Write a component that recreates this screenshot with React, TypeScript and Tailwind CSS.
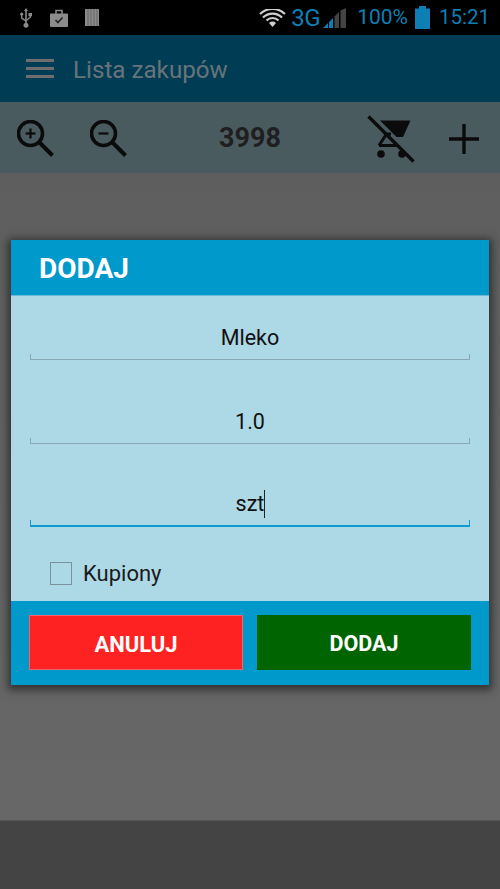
function ZoomIcon({ minus }: { minus?: boolean }) {
  return (
    <svg width="38" height="38" viewBox="0 0 38 38" fill="none" stroke="#0b0b0b" strokeWidth="3.600">
      <circle cx="13.500" cy="13.500" r="12" />
      <path d="M22 22l13.500 13.500" strokeWidth="4" />
      <path d="M8.500 13.500h10" strokeWidth="2.200" />
      {!minus && <path d="M13.500 8.500v10" strokeWidth="2.200" />}
    </svg>
  );
}

function CartOff() {
  return (
    <svg width="48" height="48" viewBox="0 0 48 48" fill="#0b0b0b">
      <path d="M13 5.500h30.500l-7.500 16.500H29.500z" />
      <path d="M12 30.500L19.500 19H24M12 30.500H31" fill="none" stroke="#0b0b0b" strokeWidth="3" />
      <circle cx="14" cy="39" r="3.800" />
      <circle cx="35" cy="39" r="3.800" />
      <path d="M1.500 1.500l45 45" stroke="#0b0b0b" strokeWidth="3.400" />
    </svg>
  );
}

function Field({ value, active, caret }: { value: string; active?: boolean; caret?: boolean }) {
  return (
    <div className={`relative mx-[19px] flex h-[38px] items-center justify-center pb-[6px] ${active ? 'border-b-2 border-[#0f9ad0]' : 'border-b border-[#8aa7b3]'}`}>
      <span className="relative text-[21.500px] leading-none text-[#111]">
        {value}
        {caret && <span className="absolute -right-[1px] -top-[3px] h-[28px] w-px bg-[#222]" />}
      </span>
      <span className={`absolute bottom-0 left-0 h-[5px] w-px ${active ? 'bg-[#0f9ad0]' : 'bg-[#8aa7b3]'}`} />
      <span className={`absolute bottom-0 right-0 h-[5px] w-px ${active ? 'bg-[#0f9ad0]' : 'bg-[#8aa7b3]'}`} />
    </div>
  );
}

export default function App() {
  return (
    <div className="relative flex h-[889px] w-[500px] flex-col overflow-hidden bg-[#666] font-['Roboto',sans-serif]">
      {/* Status bar */}
      <div className="flex h-[35px] items-center justify-between bg-black pl-[19px] pr-[10px]">
        <div className="flex items-center">
          <svg width="14" height="20" viewBox="0 0 14 20" fill="#8b8b8b">
            <path d="M7 0l2 3H7.800v12a2.500 2.500 0 11-1.600 0V13.500L2 10.500V7.500a1.500 1.500 0 111.400 0v2.300l2.800 2V3H5z" />
            <path d="M9.500 5h3.500v3.200h-1V9.500L7.800 13v-1.700l2.800-2.400V8.200H9.500z" />
          </svg>
          <svg className="ml-[17px]" width="18" height="18" viewBox="0 0 18 18">
            <path d="M1 4.500h16a1 1 0 011 1V17a1 1 0 01-1 1H1a1 1 0 01-1-1V5.500a1 1 0 011-1z" fill="#8b8b8b" />
            <path d="M6 5V1.500h6V5" fill="none" stroke="#8b8b8b" strokeWidth="1.500" />
            <path d="M5.500 11l2.500 2.500 4.500-5" fill="none" stroke="#222" strokeWidth="1.600" />
          </svg>
          <svg className="ml-[17px]" width="14" height="17" viewBox="0 0 14 17">
            <path d="M0 0h14v17H0z" fill="#8b8b8b" />
            <path d="M3 0v17M6 0v17M9 0v17M12 0v17" stroke="#5c5c5c" strokeWidth="0.800" />
          </svg>
        </div>
        <div className="flex items-center text-[#0d7fb5]">
          <svg width="27" height="18" viewBox="0 0 27 18" fill="none" stroke="#cfcfcf" strokeWidth="2.200">
            <path d="M1 5a18 18 0 0125 0" />
            <path d="M4 8.500a13.500 13.500 0 0119 0" />
            <path d="M7.500 11.500a8.500 8.500 0 0112 0" />
            <path d="M10 14l3.500 4 3.500-4a5 5 0 00-7 0z" fill="#cfcfcf" stroke="none" />
          </svg>
          <span className="ml-[5px] text-[24px] leading-none tracking-[-0.500px]">3G</span>
          <svg className="ml-[3px]" width="23" height="20" viewBox="0 0 23 20">
            <path d="M0 20l5-5v5z" fill="#0d7fb5" />
            <path d="M6 14l4-4v10H6z" fill="#0d7fb5" />
            <path d="M11.500 8.500L16 4v16h-4.500z" fill="#444" />
            <path d="M17.500 2.500L23 0v20h-5.500z" fill="#444" />
          </svg>
          <span className="ml-[11px] text-[21px] leading-none">100%</span>
          <svg className="ml-[7px]" width="15" height="23" viewBox="0 0 15 23" fill="#0d7fb5">
            <path d="M4 0h7v2.500h4V23H0V2.500h4z" />
          </svg>
          <span className="ml-[9px] text-[20.500px] leading-none">15:21</span>
        </div>
      </div>

      {/* App bar */}
      <div className="flex h-[67px] items-center bg-[#003d55] pl-[26px]">
        <svg width="28" height="19" viewBox="0 0 28 19" fill="#6e6e6e">
          <path d="M0 0h28v3H0zM0 8h28v3H0zM0 16h28v3H0z" />
        </svg>
        <span className="ml-[19px] pt-[3px] text-[24.200px] text-[#68747a]">Lista zakupów</span>
      </div>

      {/* Toolbar */}
      <div className="flex h-[71px] items-center bg-[#4a5b60] pt-[2px]">
        <div className="ml-[17px]"><ZoomIcon /></div>
        <div className="ml-[35px]"><ZoomIcon minus /></div>
        <span className="ml-[91px] w-[64px] text-[27px] font-bold text-[#1f1f1f]">3998</span>
        <div className="ml-[84px]"><CartOff /></div>
        <svg className="ml-[34px]" width="30" height="30" viewBox="0 0 30 30" fill="#0b0b0b">
          <path d="M13.300 0h3.400v13.300H30v3.400H16.700V30h-3.400V16.700H0v-3.400h13.300z" />
        </svg>
      </div>

      <div className="flex-1 bg-gradient-to-b from-[#5e5e5e] to-[#676767]" />
      <div className="h-[69px] border-t border-[#555] bg-[#444]" />

      {/* Dialog */}
      <div className="absolute left-[11px] top-[240px] flex h-[445px] w-[478px] flex-col bg-[#0099cc] shadow-[0_2px_8px_3px_rgba(0,0,0,0.5)]">
        <div className="flex h-[56px] items-center border-b border-[#6fb8d8] pl-[28px] pt-[2px] text-[28px] font-bold text-white">DODAJ</div>
        <div className="h-[305px] bg-[#add8e6] pt-[26px]">
          <Field value="Mleko" />
          <div className="h-[46px]" />
          <Field value="1.0" />
          <div className="h-[45px]" />
          <Field value="szt" active caret />
          <div className="mt-[35px] flex items-center pl-[39px]">
            <span className="h-[23px] w-[22px] border-[1.500px] border-[#7a929c]" />
            <span className="ml-[11px] text-[22px] leading-none text-[#1a1a1a]">Kupiony</span>
          </div>
        </div>
        <div className="flex flex-1 items-start gap-[14px] pl-[18px] pr-[18px] pt-[14px]">
          <button className="flex h-[55px] w-[214px] items-center justify-center border border-[#f5626a] bg-[#ff2222] pt-[3px] text-[22px] font-bold text-white">ANULUJ</button>
          <button className="flex h-[55px] w-[214px] items-center justify-center bg-[#006400] pt-[3px] text-[21.500px] font-bold text-white">DODAJ</button>
        </div>
      </div>
    </div>
  );
}
